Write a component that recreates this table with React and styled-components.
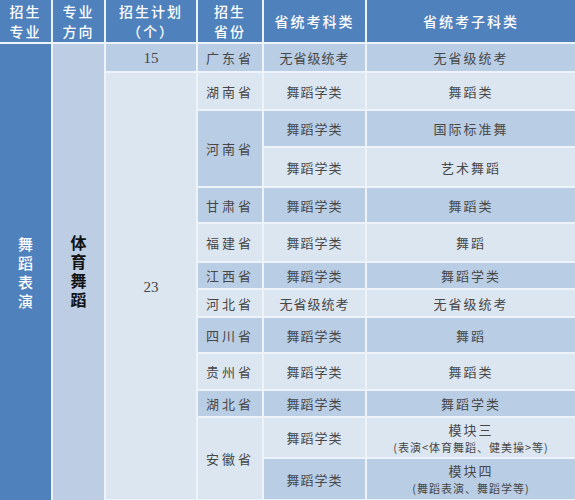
import React from 'react';
import styled, { createGlobalStyle } from 'styled-components';

const GlobalStyle = createGlobalStyle`
  html, body {
    margin: 0;
    padding: 0;
    background: #ffffff;
  }
`;

const DARK = '#b9cde5';
const LIGHT = '#dce6f1';

const rows = [
  { prov: '湖南省', cat: '舞蹈学类', sub: '舞蹈类', h: 38, tone: 'light' },
  {
    prov: '河南省',
    tone: 'dark',
    subs: [
      { cat: '舞蹈学类', sub: '国际标准舞', h: 37, tone: 'dark' },
      { cat: '舞蹈学类', sub: '艺术舞蹈', h: 40, tone: 'light' },
    ],
  },
  { prov: '甘肃省', cat: '舞蹈学类', sub: '舞蹈类', h: 36, tone: 'dark' },
  { prov: '福建省', cat: '舞蹈学类', sub: '舞蹈', h: 39, tone: 'light' },
  { prov: '江西省', cat: '舞蹈学类', sub: '舞蹈学类', h: 27, tone: 'dark' },
  { prov: '河北省', cat: '无省级统考', sub: '无省级统考', h: 28, tone: 'light' },
  { prov: '四川省', cat: '舞蹈学类', sub: '舞蹈', h: 36, tone: 'dark' },
  { prov: '贵州省', cat: '舞蹈学类', sub: '舞蹈类', h: 37, tone: 'light' },
  { prov: '湖北省', cat: '舞蹈学类', sub: '舞蹈学类', h: 27, tone: 'dark' },
  {
    prov: '安徽省',
    tone: 'light',
    subs: [
      { cat: '舞蹈学类', sub: '模块三', note: '(表演<体育舞蹈、健美操>等)', h: 41, tone: 'light' },
      { cat: '舞蹈学类', sub: '模块四', note: '(舞蹈表演、舞蹈学等)', h: 42, tone: 'dark' },
    ],
  },
];

const Table = styled.table`
  width: 575px;
  table-layout: fixed;
  border-collapse: collapse;
  font-family: 'Noto Sans CJK SC', 'Liberation Serif', serif;
  color: #474747;
`;

const Row = styled.tr`
  height: ${(p) => p.$h}px;
`;

const HeadCell = styled.th`
  background: #4f81bd;
  color: #ffffff;
  font-size: 14px;
  font-weight: 500;
  line-height: 20px;
  letter-spacing: 2px;
  text-align: center;
  vertical-align: middle;
  padding: 0;
  border: 2px solid #eef3f9;
  border-top: none;
  &:first-child { border-left: none; }
  &:last-child { border-right: none; }
`;

const Cell = styled.td`
  background: ${(p) => (p.$tone === 'dark' ? DARK : LIGHT)};
  font-size: 13px;
  letter-spacing: ${(p) => p.$spacing ?? 1}px;
  text-align: center;
  vertical-align: middle;
  padding: 0;
  border: 2px solid #eef3f9;
  &:last-child { border-right: none; }
`;

const MajorCell = styled.td`
  background: #4f81bd;
  color: #ffffff;
  font-size: 15px;
  font-weight: 500;
  text-align: center;
  vertical-align: middle;
  padding: 0;
  border: 2px solid #eef3f9;
  border-left: none;
  border-bottom: none;
`;

const DirCell = styled.td`
  background: #bccde4;
  color: #111;
  font-size: 16px;
  font-weight: 700;
  text-align: center;
  vertical-align: middle;
  padding: 0;
  border: 2px solid #eef3f9;
  border-bottom: none;
`;

const Vertical = styled.span`
  display: inline-block;
  width: 1em;
  line-height: 19px;
  white-space: normal;
  word-break: break-all;
`;

const Num = styled.span`
  font-family: 'Liberation Serif', serif;
  font-size: 15px;
  letter-spacing: 0;
`;

const Note = styled.div`
  font-size: 11px;
  letter-spacing: 1px;
  line-height: 17px;
`;

const Main = styled.div`
  line-height: 19px;
  letter-spacing: 2px;
`;

const bodyRowCount = 1 + rows.reduce((n, r) => n + (r.subs ? r.subs.length : 1), 0);

const SubCells = ({ cat, sub, note, tone }) => (
  <>
    <Cell $tone={tone}>{cat}</Cell>
    <Cell $tone={tone} $spacing={2}>
      {note ? (
        <>
          <Main>{sub}</Main>
          <Note>{note}</Note>
        </>
      ) : (
        sub
      )}
    </Cell>
  </>
);

export default function App() {
  const body = [];
  rows.forEach((r, i) => {
    if (r.subs) {
      r.subs.forEach((s, j) => {
        body.push(
          <Row key={`${i}-${j}`} $h={s.h}>
            {j === 0 && (
              <Cell rowSpan={r.subs.length} $tone={r.tone} $spacing={3}>
                {r.prov}
              </Cell>
            )}
            <SubCells {...s} />
          </Row>
        );
      });
    } else {
      body.push(
        <Row key={i} $h={r.h}>
          <Cell $tone={r.tone} $spacing={3}>{r.prov}</Cell>
          <SubCells cat={r.cat} sub={r.sub} tone={r.tone} />
        </Row>
      );
    }
  });

  return (
    <>
      <GlobalStyle />
      <Table>
        <colgroup>
          <col style={{ width: 52 }} />
          <col style={{ width: 53 }} />
          <col style={{ width: 92 }} />
          <col style={{ width: 66 }} />
          <col style={{ width: 103 }} />
          <col style={{ width: 209 }} />
        </colgroup>
        <thead>
          <Row $h={43}>
            <HeadCell>招生<br />专业</HeadCell>
            <HeadCell>专业<br />方向</HeadCell>
            <HeadCell>招生计划<br />（个）</HeadCell>
            <HeadCell>招生<br />省份</HeadCell>
            <HeadCell>省统考科类</HeadCell>
            <HeadCell>省统考子科类</HeadCell>
          </Row>
        </thead>
        <tbody>
          <Row $h={29}>
            <MajorCell rowSpan={bodyRowCount}>
              <Vertical>舞蹈表演</Vertical>
            </MajorCell>
            <DirCell rowSpan={bodyRowCount}>
              <Vertical>体育舞蹈</Vertical>
            </DirCell>
            <Cell $tone="dark"><Num>15</Num></Cell>
            <Cell $tone="dark" $spacing={3}>广东省</Cell>
            <SubCells cat="无省级统考" sub="无省级统考" tone="dark" />
          </Row>
          {body.map((row, k) =>
            k === 0 ? (
              <Row key="first" $h={row.props.$h}>
                <Cell rowSpan={bodyRowCount - 1} $tone="light">
                  <Num>23</Num>
                </Cell>
                {row.props.children}
              </Row>
            ) : (
              row
            )
          )}
        </tbody>
      </Table>
    </>
  );
}
